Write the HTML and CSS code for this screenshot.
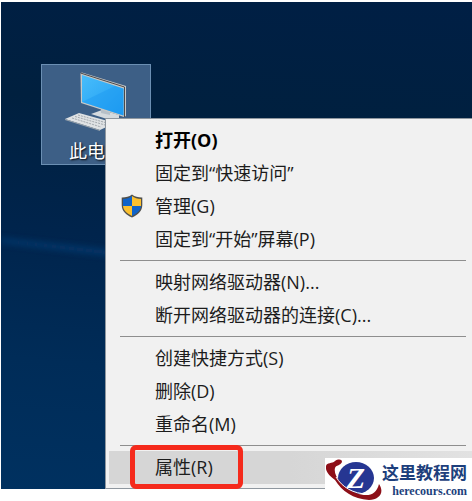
FILE: index.html
```
<!DOCTYPE html>
<html lang="zh-CN">
<head>
    <meta charset="UTF-8">
    <meta name="viewport" content="width=device-width, initial-scale=1.0">
    <title>此电脑</title>
    <link rel="stylesheet" href="styles.css">
</head>
<body>
    <main class="desktop">
        <svg class="beam" viewBox="0 0 104 60" aria-hidden="true">
            <defs>
                <filter id="soft" x="-20%" y="-100%" width="140%" height="300%">
                    <feGaussianBlur stdDeviation="3"/>
                </filter>
            </defs>
            <path d="M0 20 L110 32 V38 L0 25 Z" fill="#07417a" opacity="0.7" filter="url(#soft)"/>
        </svg>

        <button class="shortcut" type="button">
            <svg class="shortcut-icon" viewBox="0 0 62 58" aria-hidden="true">
                <defs>
                    <linearGradient id="screen" x1="0" y1="0" x2="1" y2="1">
                        <stop offset="0" stop-color="#48bdfb"/>
                        <stop offset="1" stop-color="#1e9cf2"/>
                    </linearGradient>
                </defs>
                <path d="M26 42 L37 38 L54 43 L54 48 L42 47 Z" fill="#d5dade"/>
                <path d="M36 36 L45 39 V43 L36 41 Z" fill="#b7c0c8"/>
                <path d="M15.500 1 L17 0.500 L61 14 V44 L59 45 L16 31 Z" fill="#c8c8c6"/>
                <path d="M15.500 1 L59.500 15 V45" fill="none" stroke="#4b4a4c" stroke-width="1"/>
                <path d="M17 3 L58.500 16.500 V43.500 L17 30 Z" fill="url(#screen)"/>
                <path d="M58.500 17 V43.500 L17 30 L50 14 Z" fill="#1897f0" opacity="0.4"/>
                <path d="M0 47 L14 41 L50 51 L35 58 Z" fill="#dfe2e4"/>
                <path d="M0 47 L35 58 V59 L0 48 Z" fill="#9aa3ab"/>
                <path d="M7 46 L36 55 M10 44.500 L40 53 M13 43 L42 51" stroke="#a3a9ae" stroke-width="1" stroke-dasharray="2 1" fill="none"/>
            </svg>
            <span>此电脑</span>
        </button>

        <div class="menu" role="menu">
            <button class="item item-default" type="button" role="menuitem">打开(O)</button>
            <button class="item" type="button" role="menuitem">固定到“快速访问”</button>
            <button class="item" type="button" role="menuitem">
                <svg class="shield" viewBox="0 0 22 24" aria-hidden="true">
                    <path d="M11 0.500 C8 2.800 4.500 3.600 0.700 3.500 V11 C0.800 17 5 21 11 23.500 C17 21 21.200 17 21.300 11 V3.500 C17.500 3.600 14 2.800 11 0.500 Z" fill="#50504c"/>
                    <path d="M11 2 C8.500 4 5.500 4.800 2 4.900 V12 H11 Z" fill="#0f63c9"/>
                    <path d="M11 2 C13.500 4 16.500 4.800 20 4.900 V12 H11 Z" fill="#fbc02f"/>
                    <path d="M2 12 H11 V22 C6 19.500 2.300 16.500 2 12 Z" fill="#fbc02f"/>
                    <path d="M20 12 H11 V22 C16 19.500 19.700 16.500 20 12 Z" fill="#0f63c9"/>
                </svg>
                管理(G)
            </button>
            <button class="item" type="button" role="menuitem">固定到“开始”屏幕(P)</button>
            <hr class="separator">
            <button class="item" type="button" role="menuitem">映射网络驱动器(N)...</button>
            <button class="item" type="button" role="menuitem">断开网络驱动器的连接(C)...</button>
            <hr class="separator">
            <button class="item" type="button" role="menuitem">创建快捷方式(S)</button>
            <button class="item" type="button" role="menuitem">删除(D)</button>
            <button class="item" type="button" role="menuitem">重命名(M)</button>
            <hr class="separator">
            <button class="item item-active" type="button" role="menuitem">属性(R)<span class="marker"></span></button>
        </div>
    </main>

    <aside class="brand">
        <svg class="brand-logo" viewBox="0 0 56 43" aria-hidden="true">
            <ellipse cx="30" cy="20" rx="18" ry="16" fill="#263692"/>
            <text class="brand-letter" x="30" y="30" text-anchor="middle">Z</text>
            <path d="M16 4 C14 8 10 7 9 10 C7 17 16 30 30 35 C41 39 50 38 53 26 C59 35 53 42 43 42 C27 41 16 33 9 22 C4 18 -1 14 0 8 C1 4 6 6 9 3 C12 1 16 1 16 4 Z" fill="#8d0f18"/>
            <path d="M10 19 C16 29 27 36 42 36" fill="none" stroke="#fff" stroke-width="1"/>
        </svg>
        <div class="brand-text">
            <strong class="brand-name">这里教程网</strong>
            <span class="brand-url">herecours.com</span>
        </div>
    </aside>
</body>
</html>
```

FILE: styles.css
```
* { box-sizing: border-box; }
body { margin: 0; min-height: 100vh; padding: 2px 0 12px 1px; display: flex; background: #fff; font-family: "Open Sans", "Noto Sans CJK SC", sans-serif; font-size: 18px; }
button { font: inherit; border: none; background: none; padding: 0; cursor: pointer; }

.desktop { position: relative; flex: 1; padding: 62px 40px; background: linear-gradient(185deg, #001f45 0%, #00203f 25%, #00244c 50%, #002c58 75%, #003160 100%); }
.beam { position: absolute; top: 216px; left: 0; width: 104px; height: 60px; }

/* desktop shortcut */
.shortcut { display: flex; flex-direction: column; align-items: center; gap: 8px; width: 110px; padding: 7px 0 0; border: 1px solid #6b8fb3; background: #3d5f86; color: #fff; line-height: 26px; text-shadow: 1px 1px 2px #000; }
.shortcut-icon { width: 62px; height: 58px; overflow: visible; }

/* context menu */
.menu { position: absolute; top: 116px; left: 104px; right: 0; padding: 5px 0 4px 3px; border: 1px solid #8f979f; border-right: none; background: #f1f1f1; }
.item { position: relative; display: block; width: 100%; height: 33px; padding-left: 46px; color: #1c1c1c; line-height: 33px; text-align: left; }
.item-default { font-weight: bold; color: #000; }
.item:hover, .item-active { background: #d6d6d6; }
.item-active { background: linear-gradient(to right, #d6d6d6 50%, #e2e2e2); }
.shield { position: absolute; top: 4px; left: 12px; width: 22px; height: 24px; }
.separator { height: 1px; margin: 4px 6px 5px 11px; border: none; background: #8e8e8e; }
.marker { position: absolute; top: -6px; left: 21px; width: 113px; height: 44px; border: 5px solid #f52a1c; border-radius: 6px; }

/* site badge */
.brand { position: absolute; right: 0; bottom: 0; display: flex; align-items: center; padding: 0 5px 0 1px; background: #fff; }
.brand-logo { width: 56px; height: 43px; }
.brand-letter { font-family: "Liberation Serif", serif; font-size: 30px; font-weight: bold; font-style: italic; fill: #fff; }
.brand-text { display: flex; flex-direction: column; align-items: flex-end; color: #1d3f7c; }
.brand-name { font-family: "Noto Sans CJK SC", sans-serif; font-size: 17px; line-height: 23px; font-weight: bold; }
.brand-url { font-family: "Liberation Serif", serif; font-size: 12px; line-height: 16px; font-weight: bold; }
```
